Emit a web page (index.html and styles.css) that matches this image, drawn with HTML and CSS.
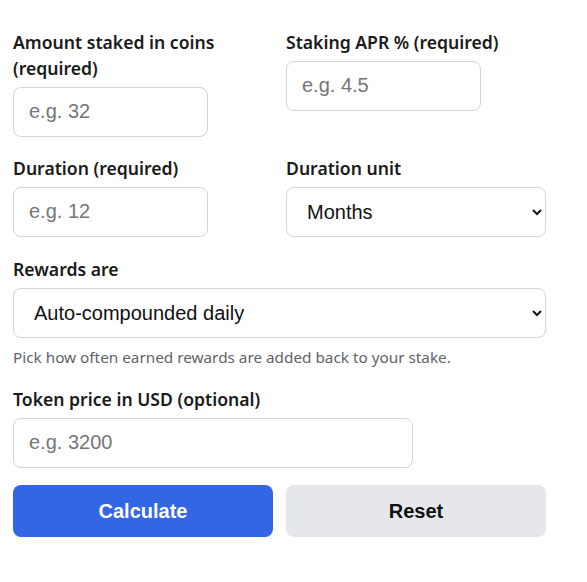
FILE: index.html
```html
<!DOCTYPE html>
<html lang="en">
<head>
    <meta charset="UTF-8">
    <meta name="viewport" content="width=device-width, initial-scale=1.0">
    <title>Staking Rewards Calculator</title>
    <link rel="stylesheet" href="styles.css">
</head>
<body>
    <form class="calc-form" onsubmit="return false">
        <!-- Amount + APR -->
        <div class="row">
            <div class="field">
                <label for="amount">Amount staked in coins (required)</label>
                <input type="number" id="amount" placeholder="e.g. 32">
            </div>
            <div class="field">
                <label for="apr">Staking APR % (required)</label>
                <input type="number" id="apr" placeholder="e.g. 4.5">
            </div>
        </div>

        <!-- Duration -->
        <div class="row">
            <div class="field">
                <label for="duration">Duration (required)</label>
                <input type="number" id="duration" placeholder="e.g. 12">
            </div>
            <div class="field">
                <label for="unit">Duration unit</label>
                <select id="unit" class="full">
                    <option>Days</option>
                    <option selected>Months</option>
                    <option>Years</option>
                </select>
            </div>
        </div>

        <div class="field rewards-field">
            <label for="rewards">Rewards are</label>
            <select id="rewards" class="full">
                <option selected>Auto-compounded daily</option>
                <option>Auto-compounded monthly</option>
                <option>Paid out (not compounded)</option>
            </select>
            <p class="hint">Pick how often earned rewards are added back to your stake.</p>
        </div>

        <div class="field">
            <label for="price">Token price in USD (optional)</label>
            <input type="number" id="price" placeholder="e.g. 3200">
        </div>

        <div class="actions">
            <button type="submit" class="btn btn-primary">Calculate</button>
            <button type="reset" class="btn btn-secondary">Reset</button>
        </div>
    </form>
</body>
</html>
```

FILE: styles.css
```css
:root {
    --primary-color: #3366e5;
    --border-color: #d1d5db;
    --text-color: #1a1a1a;
    --muted-color: #5f6368;
}

* {
    margin: 0;
    padding: 0;
    box-sizing: border-box;
}

body {
    font-family: 'Noto Sans', 'Open Sans', sans-serif;
    color: var(--text-color);
    background: #ffffff;
}

.calc-form {
    width: 533px;
    margin: 29px 0 0 13px;
    display: flex;
    flex-direction: column;
    gap: 18px;
}

.row {
    display: grid;
    grid-template-columns: 1fr 1fr;
    gap: 13px;
    align-items: start;
}

.field {
    display: flex;
    flex-direction: column;
}

.rewards-field {
    margin-top: 1px;
}

label {
    font-size: 17.6px;
    font-weight: 600;
    line-height: 26px;
    margin-bottom: 6px;
}

input,
select {
    height: 50px;
    border: 1px solid var(--border-color);
    border-radius: 8px;
    padding: 0 15px;
    font-family: 'Liberation Sans', Arial, sans-serif;
    font-size: 20px;
    color: #111;
    background: #fff;
}

input {
    width: 75%;
    padding-bottom: 2px;
}

input::placeholder {
    color: #767676;
}

select.full {
    width: 100%;
    padding-left: 16px;
}

.hint {
    margin: 9px 0 1px;
    font-size: 15.3px;
    color: var(--muted-color);
    line-height: 20px;
}

.actions {
    display: grid;
    grid-template-columns: 1fr 1fr;
    gap: 13px;
    margin-top: -1px;
}

.btn {
    height: 52px;
    border: none;
    border-radius: 8px;
    font-family: 'Liberation Sans', Arial, sans-serif;
    font-size: 20px;
    font-weight: bold;
    cursor: pointer;
}

.btn-primary {
    background: var(--primary-color);
    color: #fff;
}

.btn-secondary {
    background: #e5e7eb;
    color: #111;
}
```
